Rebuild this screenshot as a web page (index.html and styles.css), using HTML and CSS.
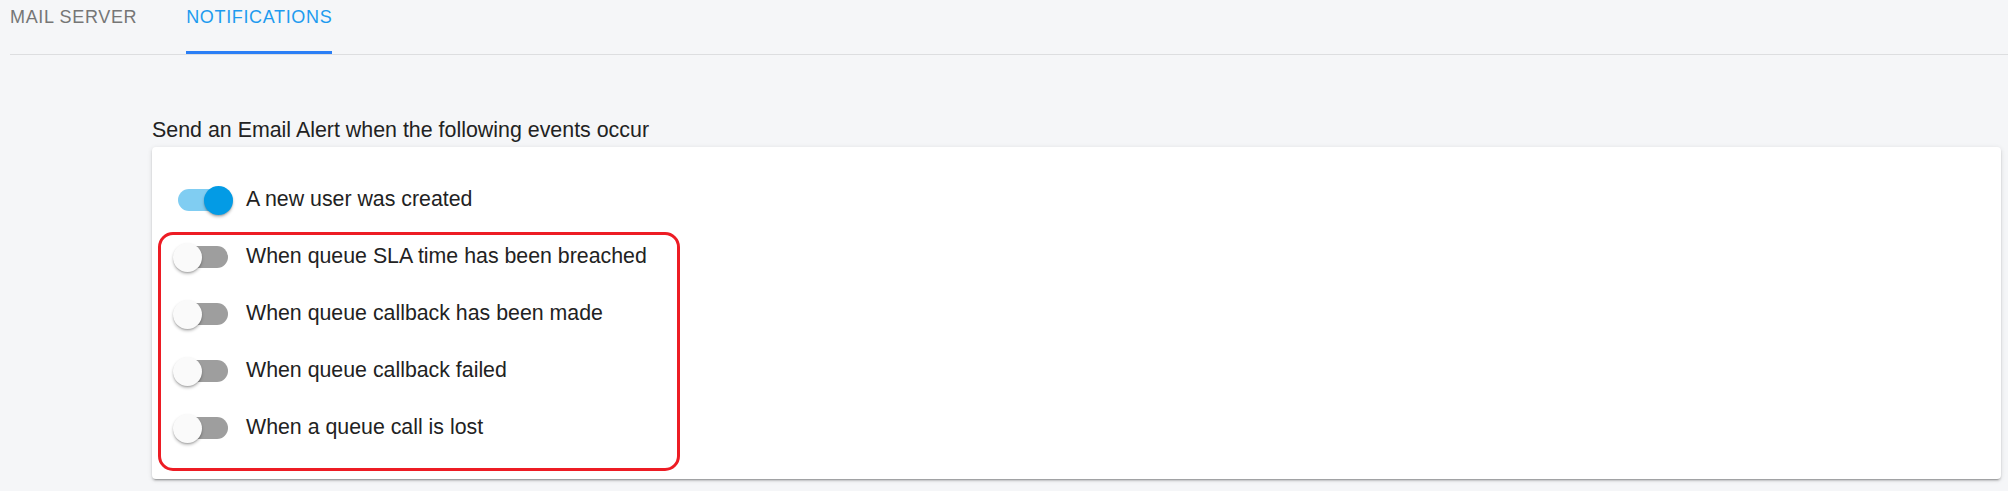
FILE: index.html
```html
<!DOCTYPE html>
<html lang="en">
<head>
<meta charset="utf-8">
<title>Notifications</title>
<link rel="stylesheet" href="styles.css">
</head>
<body>
<nav class="tabs">
  <div class="tab">MAIL SERVER</div>
  <div class="tab tab-active">NOTIFICATIONS</div>
</nav>
<main class="content">
  <p class="heading">Send an Email Alert when the following events occur</p>
  <section class="card">
    <div class="row">
      <span class="switch switch-on"><span class="track"></span><span class="thumb"></span></span>
      <span class="label">A new user was created</span>
    </div>
    <div class="group">
      <div class="row">
        <span class="switch"><span class="track"></span><span class="thumb"></span></span>
        <span class="label">When queue SLA time has been breached</span>
      </div>
      <div class="row">
        <span class="switch"><span class="track"></span><span class="thumb"></span></span>
        <span class="label">When queue callback has been made</span>
      </div>
      <div class="row">
        <span class="switch"><span class="track"></span><span class="thumb"></span></span>
        <span class="label">When queue callback failed</span>
      </div>
      <div class="row">
        <span class="switch"><span class="track"></span><span class="thumb"></span></span>
        <span class="label">When a queue call is lost</span>
      </div>
    </div>
  </section>
</main>
</body>
</html>
```
FILE: styles.css
```css
* { box-sizing: border-box; }
html, body { margin: 0; padding: 0; }
body {
  background: #f5f6f8;
  font-family: "Liberation Sans", Arial, sans-serif;
  color: #222;
  width: 2008px;
  height: 491px;
  overflow: hidden;
}
.tabs {
  display: flex;
  gap: 49px;
  margin-left: 10px;
  height: 55px;
  border-bottom: 1px solid #dddee0;
}
.tab {
  font-size: 18px;
  letter-spacing: 0.65px;
  line-height: 20px;
  padding-top: 7px;
  height: 54px;
  color: #767676;
  border-bottom: 3px solid transparent;
}
.tab-active {
  color: #1e9bef;
  border-bottom-color: #2b7ff6;
}
.content {
  padding: 0 7px 0 152px;
}
.heading {
  margin: 63px 0 5px;
  font-size: 21.4px;
  line-height: 24px;
  color: #222;
}
.card {
  background: #fff;
  border-radius: 4px;
  padding: 24.5px 0 22.5px;
  box-shadow: 0 3px 1px -2px rgba(0,0,0,.2), 0 2px 2px 0 rgba(0,0,0,.14), 0 1px 5px 0 rgba(0,0,0,.12);
}
.row {
  display: flex;
  align-items: center;
  height: 57px;
  padding-left: 21px;
  gap: 13px;
}
.label {
  font-size: 21.33px;
  line-height: 24px;
  margin-bottom: 3px;
  color: #222;
}
.switch {
  display: grid;
  align-items: center;
  width: 60px;
  height: 29px;
}
.track, .thumb { grid-area: 1 / 1; }
.track {
  justify-self: center;
  width: 50px;
  height: 22px;
  border-radius: 11px;
  background: #9e9e9e;
}
.thumb {
  justify-self: start;
  width: 29px;
  height: 29px;
  border-radius: 50%;
  background: #fafafa;
  box-shadow: 0 2px 3px rgba(0,0,0,.25), 0 1px 1px rgba(0,0,0,.12);
}
.switch-on .track { background: #80cdf2; }
.switch-on .thumb {
  justify-self: end;
  background: #039be5;
}
.group {
  position: relative;
}
.group::before {
  content: "";
  position: absolute;
  left: 6px;
  top: 3.5px;
  width: 516px;
  bottom: -14px;
  border: 3px solid #ed1c24;
  border-radius: 15px;
  pointer-events: none;
}
```
